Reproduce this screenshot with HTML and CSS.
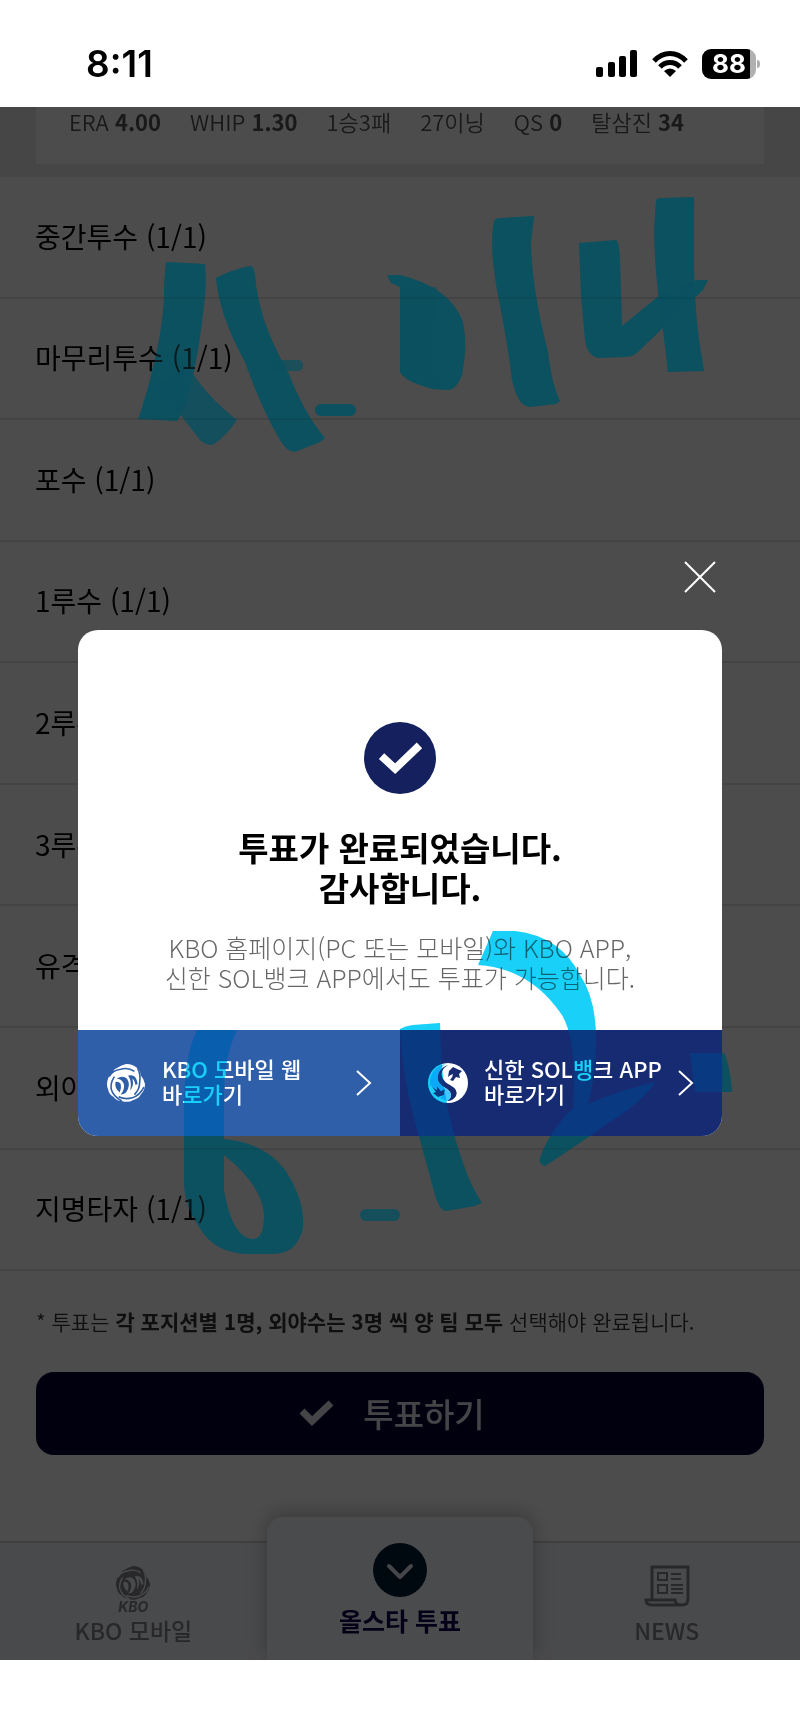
FILE: index.html
```html
<!DOCTYPE html>
<html lang="ko">
<head>
    <meta charset="UTF-8">
    <meta name="viewport" content="width=device-width, initial-scale=1.0">
    <title>올스타 투표</title>
    <link rel="stylesheet" href="styles.css">
</head>
<body>
    <!-- shared shapes -->
    <svg class="defs" width="0" height="0" aria-hidden="true">
        <mask id="kbo-cuts">
            <rect width="36" height="36" fill="#fff"/>
            <path fill="none" stroke="#000" stroke-width="1.500" d="M2 12 Q5 6 13 5 Q20 3 26 7 M29 4 Q32 10 31 17 Q31 24 26 29 M35 22 Q31 30 24 32 Q17 34 11 31 M14 35 Q6 31 4 24 Q3 18 7 12"/>
            <path fill="#000" d="M9 14 Q15 10 19 14 Q23 20 18 27 Q16 29 13 29 Q17 24 16 19 Q14 14 9 14Z M8 17 Q11 16 13 19 Q14 23 12 27 Q7 23 8 17Z M20 11 Q28 9 29 19 L27 20 Q26 15 24 14 Q26 20 22 25 Q24 17 20 11Z"/>
        </mask>
        <symbol id="kbo-mark" viewBox="0 0 36 36">
            <path mask="url(#kbo-cuts)" fill="currentColor" d="M9 4 Q14 1 18 0 Q25 0 30 5 Q32 8 32 11 Q35 14 36 19 Q36 25 32 29 Q30 33 25 34 Q20 37 14 35 Q9 35 6 31 Q2 29 1 24 Q-1 19 1 14 Q2 10 6 8 Q6 5 9 4Z"/>
        </symbol>
        <g id="ink" fill-opacity="0.97">
            <path d="M166 262 L205 264 Q207 285 204 305 Q200 345 192 380 Q184 412 177 421 L138 419 Q147 395 157 350 Q165 310 164 285Z"/>
            <path fill-opacity="0.85" d="M150 386 L188 366 Q205 395 237 420 Q226 436 214 444 Q208 447 200 440 L180 414 Q162 402 150 386Z"/>
            <path d="M216 278 Q230 270 250 266 Q254 266 255 275 Q258 320 288 372 Q305 415 325 438 L320 442 L295 452 Q287 452 280 440 Q262 410 245 362 Q219 315 216 278Z"/>
            <rect x="270" y="360" width="33" height="11" rx="5" fill-opacity="0.7"/>
            <rect x="315" y="404" width="41" height="12" rx="6"/>
            <path d="M387 275 L400 275 Q450 287 463 322 Q468 345 462 375 Q456 390 448 390 L433 389 Q405 382 400 372 L400 287 L391 283Z"/>
            <path fill-opacity="0.5" d="M400 287 L437 287 L440 389 Q405 382 400 372Z"/>
            <path d="M494 221 Q496 218 500 218 L534 216 L531 243 Q532 290 548 352 Q552 385 560 401 L556 404 L530 407 Q518 407 512 380 Q508 345 497 290 Q489 245 494 221Z"/>
            <path d="M579 243 L616 240 Q619 240 620 260 L622 326 L660 295 L697 280 L708 280 L703 290 L643 347 Q635 357 625 357 L598 358 Q587 355 585 340 L581 295Z"/>
            <path d="M656 200 Q657 198 663 198 L693 197 Q695 198 694 202 L694 270 Q695 310 699 340 L704 371 L668 372 L663 330 Q655 280 654 230Z"/>
            <path fill-rule="evenodd" d="M197 1030 H237 Q225 1055 224 1090 V1139 Q265 1143 285 1170 Q305 1200 303 1228 Q297 1254 273 1254 L245 1254 Q212 1252 198 1225 Q184 1205 184 1180 V1100 Q185 1055 197 1030Z M224 1155 Q262 1185 264 1215 Q264 1240 252 1239 Q232 1237 224 1190Z"/>
            <rect x="360" y="1209" width="40" height="12" rx="6" fill-opacity="0.8"/>
            <path d="M400 1029 Q405 1026 413 1025 L440 1023 L441 1050 Q443 1105 462 1160 Q470 1185 482 1203 L475 1206 L446 1211 Q440 1211 435 1195 L420 1140 Q402 1080 400 1030Z"/>
            <path d="M493 931 H515 Q560 936 580 975 Q597 1000 596 1045 Q595 1080 588 1104 Q620 1090 655 1082 Q645 1100 610 1122 Q570 1150 545 1166 Q538 1164 540 1158 Q550 1130 573 1108 Q577 1040 562 1015 Q530 968 478 965Z"/>
            <path d="M690 1053 H724 Q730 1065 732 1092 L695 1092Z"/>
        </g>
    </svg>

    <div class="phone">
        <header class="status-bar">
            <span class="clock">8:11</span>
            <div class="status-icons">
                <svg width="42" height="28" viewBox="0 0 42 28" aria-hidden="true">
                    <rect x="0" y="17" width="7" height="10" rx="2"/>
                    <rect x="12" y="12" width="7" height="15" rx="2"/>
                    <rect x="23" y="6" width="7" height="21" rx="2"/>
                    <rect x="34" y="0" width="7" height="27" rx="2"/>
                </svg>
                <svg width="36" height="28" viewBox="0 0 36 28" aria-hidden="true">
                    <path fill="none" stroke="#000" stroke-width="5" d="M2 11 Q9 3.500 18 3.500 Q27 3.500 34 11 M8 17 Q12 12.500 18 12.500 Q24 12.500 28 17"/>
                    <path d="M12 21 Q18 16 24 21 L18 27Z"/>
                </svg>
                <div class="battery"><span>88</span></div>
            </div>
        </header>

        <main class="screen">
            <section class="stats">
                <ul class="stats-card">
                    <li>ERA <b>4.00</b></li>
                    <li>WHIP <b>1.30</b></li>
                    <li>1승3패</li>
                    <li>27이닝</li>
                    <li>QS <b>0</b></li>
                    <li>탈삼진 <b>34</b></li>
                </ul>
            </section>

            <ul class="positions">
                <li>중간투수 (1/1)</li>
                <li>마무리투수 (1/1)</li>
                <li>포수 (1/1)</li>
                <li>1루수 (1/1)</li>
                <li>2루수 (1/1)</li>
                <li>3루수 (1/1)</li>
                <li>유격수 (1/1)</li>
                <li>외야수 (3/3)</li>
                <li>지명타자 (1/1)</li>
            </ul>

            <section class="vote">
                <p class="vote-note">* 투표는 <b>각 포지션별 1명, 외야수는 3명 씩 양 팀 모두</b> 선택해야 완료됩니다.</p>
                <button class="vote-button" type="button">
                    <svg width="36" height="28" viewBox="0 0 36 28" aria-hidden="true">
                        <path fill="none" stroke="currentColor" stroke-width="7" d="M3 12 L13 22 L32 4"/>
                    </svg>
                    <span>투표하기</span>
                </button>
            </section>

            <nav class="tab-bar">
                <a class="tab" href="#kbo">
                    <svg width="34" height="34" aria-hidden="true"><use href="#kbo-mark"/></svg>
                    <span class="kbo-name">KBO</span>
                    <span>KBO 모바일</span>
                </a>
                <a class="tab tab-active" href="#vote">
                    <svg width="54" height="54" viewBox="0 0 54 54" aria-hidden="true">
                        <circle cx="27" cy="27" r="27" fill="#002038"/>
                        <path fill="none" stroke="#e6eaf5" stroke-width="4" stroke-linecap="round" stroke-linejoin="round" d="M16 23 L27 34 L38 23"/>
                    </svg>
                    <span>올스타 투표</span>
                </a>
                <a class="tab" href="#news">
                    <svg class="news-icon" width="46" height="42" viewBox="0 0 46 42" fill="none" stroke="currentColor" stroke-width="3" aria-hidden="true">
                        <path d="M8 34 V2 H44 V34 Q44 40 38 40 H8 Q2 40 2 35 H31 Q31 40 38 40"/>
                        <path d="M14 8 H23 V15 H14Z M14 20 H23 V28 H14Z M27 9 H37 M27 14 H37 M27 20 H39 M27 24 H39 M27 28 H39" stroke-width="2"/>
                    </svg>
                    <span>NEWS</span>
                </a>
            </nav>

            <div class="dim">
                <div class="modal" role="dialog" aria-labelledby="modal-title">
                    <button class="modal-close" type="button" aria-label="닫기">
                        <svg width="32" height="32" viewBox="0 0 32 32" aria-hidden="true">
                            <path stroke="#fff" stroke-width="2" d="M1 1 L31 31 M31 1 L1 31"/>
                        </svg>
                    </button>
                    <div class="modal-body">
                        <svg width="72" height="72" viewBox="0 0 74 74" aria-hidden="true">
                            <circle cx="37" cy="37" r="37" fill="#15205f"/>
                            <path fill="none" stroke="#fff" stroke-width="8" d="M18 35 L32 48 L57 24"/>
                        </svg>
                        <h1 id="modal-title">투표가 완료되었습니다.<br>감사합니다.</h1>
                        <p>KBO 홈페이지(PC 또는 모바일)와 KBO APP,<br>신한 SOL뱅크 APP에서도 투표가 가능합니다.</p>
                    </div>
                    <div class="modal-links">
                        <a class="link-kbo" href="#kbo-web">
                            <svg width="40" height="38" aria-hidden="true"><use href="#kbo-mark"/></svg>
                            <span>KBO 모바일 웹<br>바로가기</span>
                            <svg class="arrow" width="16" height="28" viewBox="0 0 16 28" aria-hidden="true">
                                <path fill="none" stroke="#fff" stroke-width="2" d="M1 2 L14 14 L1 26"/>
                            </svg>
                        </a>
                        <a class="link-sol" href="#sol-app">
                            <svg width="40" height="40" viewBox="0 0 40 40" aria-hidden="true">
                                <circle cx="20" cy="20" r="20" fill="#fff"/>
                                <path fill="#172b73" d="M20 2 Q12 7 14 14 Q16 19 22 22 Q31 27 28 33 Q25 38 19 38 Q25 34 22 29 Q20 26 14 23 Q7 17 11 9 Q14 4 20 2Z"/>
                                <path fill="#172b73" d="M21 8 L25 4 L29 6 L34 8 L31 11 L32 15 L28 14 L25 18 L22 17 Q25 14 25 11 Q22 12 20 14Z M4 24 L9 27 L9 23 L13 28 L17 26 L16 32 L10 34 L5 30 L8 29Z"/>
                                <path fill="#40c8ff" d="M17 1 A19 19 0 0 0 2 22 L4 24 L9 27 L9 23 L13 28 L17 26 L16 32 L12 35 L19 38 Q25 34 22 29 Q20 26 14 23 Q7 17 11 9 Q13 4 17 1Z"/>
                            </svg>
                            <span>신한 SOL뱅크 APP<br>바로가기</span>
                            <svg class="arrow" width="16" height="28" viewBox="0 0 16 28" aria-hidden="true">
                                <path fill="none" stroke="#fff" stroke-width="2" d="M1 2 L14 14 L1 26"/>
                            </svg>
                        </a>
                    </div>
                </div>
            </div>
        </main>

        <div class="home-area"></div>

        <!-- highlighter: one multiply pass, one light pass -->
        <svg class="marker marker-multiply" viewBox="0 0 800 1733" aria-hidden="true"><use href="#ink"/></svg>
        <svg class="marker marker-tint" viewBox="0 0 800 1733" aria-hidden="true"><use href="#ink"/></svg>
    </div>
</body>
</html>
```
FILE: styles.css
```css
* {
    box-sizing: border-box;
}
body {
    margin: 0;
    background: #fff;
    font-family: "Noto Sans CJK KR", sans-serif;
    color: #000;
}
ul, p, h1 {
    margin: 0;
    padding: 0;
    list-style: none;
}
a {
    color: inherit;
    text-decoration: none;
}
button {
    border: 0;
    padding: 0;
    font-family: inherit;
    cursor: pointer;
}
.defs {
    position: absolute;
}
.phone {
    position: relative;
    display: flex;
    flex-direction: column;
    min-height: 100vh;
}

/* status bar */
.status-bar {
    display: flex;
    justify-content: space-between;
    align-items: center;
    height: 107px;
    padding: 20px 40px 0 86px;
}
.clock {
    font-family: Inter, sans-serif;
    font-size: 37px;
    font-weight: 600;
}
.status-icons {
    display: flex;
    align-items: center;
    gap: 14px;
}
.battery {
    position: relative;
    width: 54px;
    height: 30px;
    margin-right: 4px;
    border-radius: 9px;
    background: linear-gradient(to right, #000 88%, #b0b0b0 88%);
    color: #fff;
    font: 700 26px/30px Inter, sans-serif;
    text-align: center;
}
.battery::after {
    content: "";
    position: absolute;
    right: -4px;
    top: 11px;
    width: 3px;
    height: 8px;
    border-radius: 0 3px 3px 0;
    background: #b0b0b0;
}

/* page under the popup */
.screen {
    position: relative;
    flex: 1;
    display: flex;
    flex-direction: column;
}
.stats {
    padding: 0 36px 13px;
    background: #e9e9e9;
}
.stats-card {
    display: flex;
    gap: 29px;
    padding: 0 33px 28px;
    background: #fff;
    color: #555;
    font-size: 22px;
    font-weight: 350;
    line-height: 29px;
    white-space: nowrap;
}
.stats-card b {
    color: #555;
    font-weight: 700;
}
.positions {
    flex: 1;
    display: flex;
    flex-direction: column;
}
.positions li {
    flex: 1;
    display: flex;
    align-items: center;
    padding: 0 35px 2px;
    border-bottom: 2px solid #e4e4e4;
    font-size: 28px;
    font-weight: 400;
}
.vote {
    padding: 35px 36px 86px;
}
.vote-note {
    margin-bottom: 36px;
    color: #333;
    font-size: 21px;
    font-weight: 350;
    line-height: 30px;
    white-space: nowrap;
}
.vote-button {
    display: flex;
    justify-content: center;
    align-items: center;
    gap: 28px;
    width: 100%;
    height: 83px;
    padding: 0 16px 2px 0;
    border-radius: 18px;
    background: #000035;
    color: #e6e6f0;
    font-size: 33px;
    font-weight: 500;
}
.tab-bar {
    display: flex;
    align-items: flex-end;
    height: 119px;
    border-top: 2px solid #d0d2da;
    background: #f5f7fd;
    color: #85868c;
}
.tab {
    flex: 1;
    display: flex;
    flex-direction: column;
    align-items: center;
    padding-bottom: 14px;
    font-size: 23px;
    font-weight: 500;
    line-height: 32px;
}
.kbo-name {
    font: italic 700 14px/14px Inter, sans-serif;
}
.news-icon {
    margin-bottom: 7px;
}
.tab-active {
    height: 143px;
    padding: 26px 0 0;
    border-radius: 16px 16px 0 0;
    background: #f8faff;
    box-shadow: 0 -4px 20px rgba(0, 0, 0, 0.25);
    color: #10004f;
    font-size: 25px;
    font-weight: 700;
    clip-path: inset(-40px -40px 0);
}
.tab-active span {
    margin-top: 7px;
}
.home-area {
    height: 73px;
}

/* popup */
.dim {
    position: absolute;
    inset: 0;
    display: flex;
    justify-content: center;
    align-items: center;
    padding: 0 78px 2px;
    background: rgba(0, 0, 0, 0.7);
}
.modal {
    position: relative;
    width: 100%;
    border-radius: 20px;
    background: #fff;
}
.modal-close {
    position: absolute;
    top: -75px;
    right: 0;
    display: grid;
    place-items: center;
    width: 44px;
    height: 44px;
    background: none;
}
.modal-body {
    display: flex;
    flex-direction: column;
    align-items: center;
    padding: 92px 20px 38px;
    text-align: center;
    white-space: nowrap;
}
.modal-body h1 {
    margin-top: 33px;
    font-size: 33px;
    font-weight: 700;
    line-height: 40px;
}
.modal-body p {
    margin-top: 25px;
    color: #666;
    font-size: 25px;
    font-weight: 300;
    line-height: 30px;
}
.modal-links {
    display: flex;
    border-radius: 0 0 20px 20px;
    overflow: hidden;
}
.modal-links a {
    flex: 1;
    display: flex;
    align-items: center;
    gap: 16px;
    height: 106px;
    padding: 0 28px;
    color: #fff;
    font-size: 22px;
    font-weight: 500;
    line-height: 25px;
    white-space: nowrap;
}
.modal-links span {
    padding-bottom: 3px;
}
.modal-links .link-kbo {
    background: #2f5fa8;
}
.modal-links .link-sol {
    background: #172b73;
}
.arrow {
    margin-left: auto;
}

/* handwriting on top of everything */
.marker {
    position: absolute;
    top: 0;
    left: 0;
    width: 100%;
    pointer-events: none;
}
.marker-multiply {
    fill: #0cd4ff;
    mix-blend-mode: multiply;
}
.marker-tint {
    fill: #2fb4cf;
    opacity: 0.15;
}
```
